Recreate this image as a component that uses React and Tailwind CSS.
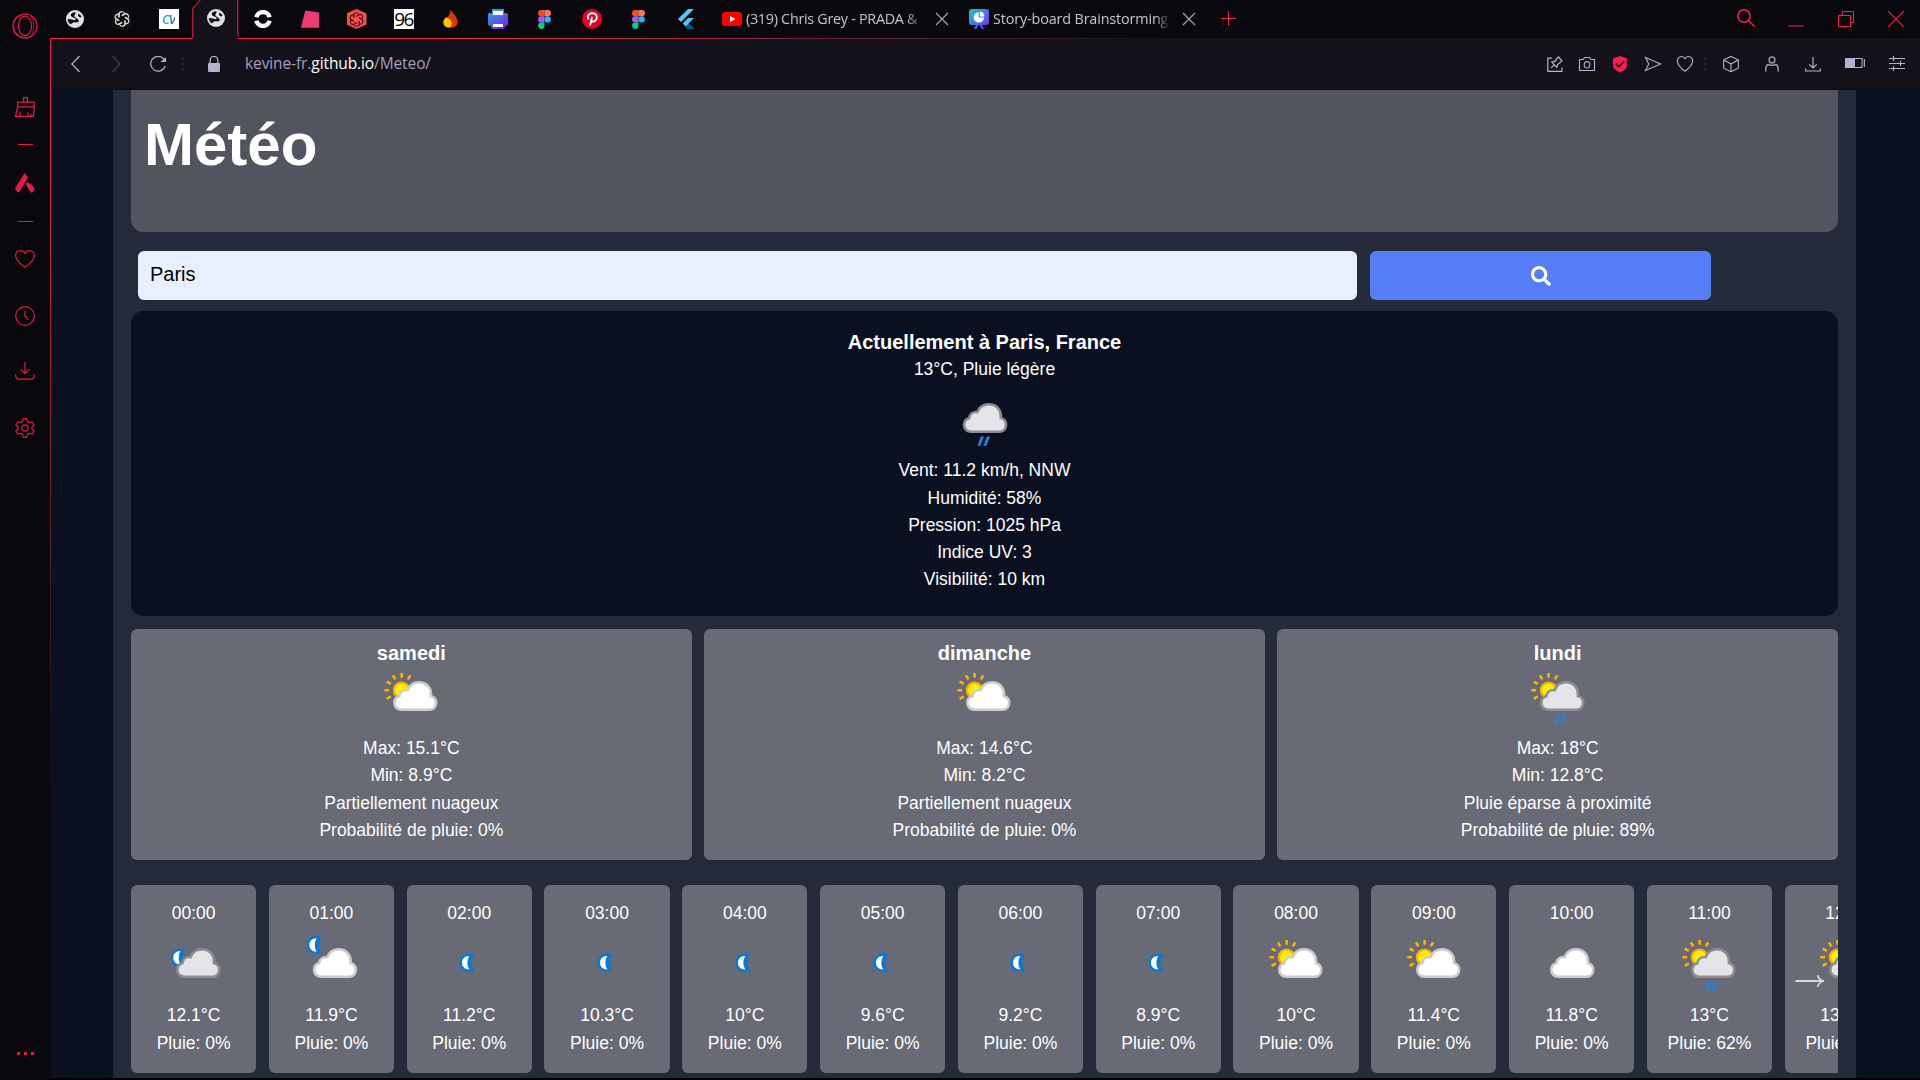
import React from "react";
import { FaSearch } from "react-icons/fa";

const RED = "#fa1e4e";
const LILAC = "#b9b0cf";

const CLOUD =
  "M8.5 28.7C4 28.7 1.3 25.7 1.3 22C1.3 18.7 3.3 16 6.3 15.3C6.8 11.2 10 8.6 14.6 9.1C16.5 4 21 1.3 26.3 1.3C33 1.3 38 6.3 38 13C38 13.8 38 14.4 37.9 15.1C41 16 43.2 18.5 43.2 21.8C43.2 25.8 40.5 28.7 36.5 28.7Z";

function Moon({ x, y }) {
  return (
    <g transform={`translate(${x} ${y})`}>
      <path d="M15.5 1.8C8.5 -1 0.5 2.5 0.5 10C0.5 17.5 8.5 21 15.5 18.2C11.2 13 11.2 7 15.5 1.8Z" fill="#0a78d8" />
      <path d="M10.3 3.3C5.8 3.2 3 6 3 10C3 14 5.8 16.8 10.3 16.7C7.8 12.5 7.8 7.5 10.3 3.3Z" fill="#fff" />
    </g>
  );
}

function Cloud({ x, dark }) {
  return (
    <path
      d={CLOUD}
      transform={`translate(${x} 14)`}
      fill={dark ? "#e5e4e9" : "#fff"}
      stroke={dark ? "#8e8e8f" : "#cbcbcc"}
      strokeWidth="2.6"
    />
  );
}

function Rain({ x }) {
  return (
    <g transform={`translate(${x} 47)`} fill="#1f86e0">
      <path d="M4 0.5H7L3.4 9.7H0.4Z" />
      <path d="M10 0.5H13L9.4 9.7H6.4Z" />
    </g>
  );
}

function Sun() {
  return (
    <g>
      <circle cx="30.6" cy="23.2" r="7.6" fill="#fff200" stroke="#ffb000" strokeWidth="2.4" />
      <g stroke="#ffb000" strokeWidth="2.6">
        {[-120, -90, -60, -30, 0, 30].map((a) => (
          <path key={a} d="M30.6 10.7V6" transform={`rotate(${a} 30.6 23.2)`} />
        ))}
      </g>
    </g>
  );
}

function Weather({ kind, className }) {
  return (
    <svg viewBox="0 0 80 60" className={`h-[60px] w-[80px] shrink-0 ${className || ""}`}>
      {kind === "moon" && <Moon x={30} y={18.7} />}
      {kind === "night-overcast" && (<><Moon x={16.3} y={13.7} /><Cloud x={22} dark /></>)}
      {kind === "night-cloud" && (<><Moon x={15.4} y={1} /><Cloud x={21.7} /></>)}
      {kind === "sun-cloud" && (<><Sun /><Cloud x={22} /></>)}
      {kind === "sun-rain" && (<><Sun /><Cloud x={22} dark /><Rain x={35.8} /></>)}
      {kind === "cloud" && <Cloud x={18} />}
      {kind === "rain" && (<><Cloud x={17.8} dark /><Rain x={32} /></>)}
    </svg>
  );
}

function Globe() {
  return (
    <svg viewBox="0 0 18 18" className="size-[18px]">
      <circle cx="9" cy="9" r="9" fill="#dfe1e5" />
      <path d="M9.6 2.2C6 2.4 4.6 3.6 4.9 5.6C5.2 7.5 7.6 7.4 9 8.2C10.2 9 9.8 10.4 8.2 10.2C5.8 9.9 4.4 8.6 1.8 9.2C2 12 3.2 13.6 4.8 14.2C6.4 13.6 6.2 12.4 8 12.2C11 12 13.4 12.8 12.6 10.2C12 8.4 9.2 8 8.4 6.4C7.8 5 9.6 5 9.6 2.2Z" fill="#09080d" />
      <path d="M14.6 7.5C12.4 6.6 11.2 5.6 12.4 3.4L15.6 6.2Z" fill="#09080d" />
    </svg>
  );
}

function Knot({ color, size }) {
  return (
    <svg viewBox="-10 -10 20 20" width={size} height={size} fill="none" stroke={color} strokeWidth="1.5">
      {[0, 60, 120, 180, 240, 300].map((a) => (
        <path key={a} d="M-3.8 -2.1V-6C-3.8 -9.6 1.4 -10 2.9 -7.2M-0.2 -4.2L4.4 -6.6" transform={`rotate(${a})`} />
      ))}
    </svg>
  );
}

function Figma() {
  return (
    <svg viewBox="0 0 13 19" className="h-[19px] w-[13px]">
      <path d="M3.2 0H6.5V6.3H3.2A3.15 3.15 0 0 1 3.2 0Z" fill="#f24e1e" />
      <path d="M6.5 0H9.8A3.15 3.15 0 0 1 9.8 6.3H6.5Z" fill="#ff7262" />
      <path d="M3.2 6.3H6.5V12.6H3.2A3.15 3.15 0 0 1 3.2 6.3Z" fill="#a259ff" />
      <circle cx="9.7" cy="9.45" r="3.15" fill="#1abcfe" />
      <path d="M3.2 12.6H6.5V15.8A3.2 3.2 0 1 1 3.2 12.6Z" fill="#0acf83" />
    </svg>
  );
}

const favicons = [
  <Globe />,
  <span className="grid size-[19px] place-items-center rounded-sm bg-[#0f0f0f]"><Knot color="#e8e8e8" size={16} /></span>,
  <span className="grid size-5 place-items-center bg-white">
    <span className="bg-linear-to-r from-[#16c0e8] to-[#1f4fe0] bg-clip-text font-['Open_Sans',sans-serif] text-[13px] leading-none font-semibold tracking-[-1px] text-transparent italic">CV</span>
  </span>,
  <Globe />,
  <svg viewBox="0 0 18 18" className="size-[18px]" fill="none" stroke="#fff" strokeWidth="4.4">
    <path d="M2.4 7.2A6.8 6.8 0 0 1 15.6 7.2M2.4 10.8A6.8 6.8 0 0 0 15.6 10.8" />
  </svg>,
  <svg viewBox="0 0 18 18" className="size-[18px]"><path d="M4.2 0.6L18 2.6V17.8H0Z" fill="#f03a78" /></svg>,
  <span className="grid size-5 place-items-center bg-[#f1504f] [clip-path:polygon(50%_0,100%_22%,100%_78%,50%_100%,0_78%,0_22%)]"><Knot color="#5a0f12" size={15} /></span>,
  <span className="grid size-5 place-items-center overflow-hidden bg-white font-['Open_Sans',sans-serif] text-[19px] leading-none tracking-[-1.5px] text-black">96</span>,
  <svg viewBox="0 0 15 18" className="h-[18px] w-[15px]">
    <path d="M7.5 0C10.5 3.5 14.6 7.5 14.6 11.8C14.6 15.8 11.5 17.8 7.3 17.8C3.5 17.8 1.5 14 3.5 9.5C5 6 7.6 4 7.5 0Z" fill="#e03400" />
    <path d="M3 7.2C6 8.2 9 11 8.8 14C8.6 16.3 7 17.6 5 17.4C2 17.1 0.2 15 0.3 12.2C0.4 10 1.8 8.6 3 7.2Z" fill="#ffc400" />
  </svg>,
  <svg viewBox="0 0 20 20" className="size-5">
    <defs><linearGradient id="pr" x1="0" y1="0" x2="0.6" y2="1"><stop offset="0" stopColor="#12c4d8" /><stop offset="0.5" stopColor="#4d6ee8" /><stop offset="1" stopColor="#6c2be0" /></linearGradient></defs>
    <path d="M4 0H16V4H18A2 2 0 0 1 20 6V15A2 2 0 0 1 18 17H17V18A2 2 0 0 1 15 20H5A2 2 0 0 1 3 18V17H2A2 2 0 0 1 0 15V6A2 2 0 0 1 2 4H4Z" fill="url(#pr)" />
    <path d="M5 2H15V6H5ZM5 15H15V18H5Z" fill="#fff" />
  </svg>,
  <Figma />,
  <svg viewBox="0 0 20 20" className="size-5">
    <circle cx="10" cy="10" r="10" fill="#e60023" />
    <path d="M8 16.5L10.2 7.8M6.6 10.6C4.4 7 7 4.2 10.4 4.2C14 4.2 15.4 6.8 14.6 9.6C13.6 13 10.6 13.2 9.4 11.6" fill="none" stroke="#fff" strokeWidth="1.9" />
  </svg>,
  <Figma />,
  <svg viewBox="0 0 16 20" className="h-5 w-4">
    <path d="M10 0H16L3 13L0 10Z" fill="#54c5f8" />
    <path d="M10 9H16L10.6 14.5L16 20H10L4.8 14.6Z" fill="#54c5f8" />
    <path d="M7.6 17.4L10.6 14.5L16 20H10Z" fill="#01579b" />
  </svg>,
];

function CloseX() {
  return (
    <svg viewBox="0 0 14 14" className="size-[14px] shrink-0" stroke="#a5a5a8" strokeWidth="1.2"><path d="M1 1L13 13M13 1L1 13" /></svg>
  );
}

function TabBar() {
  return (
    <div className="flex h-[38px] items-center pl-[1px]">
      {favicons.map((icon, i) => (
        <div key={i} className={i === 3 ? "relative z-10 flex h-[40px] w-[47px] shrink-0 items-center justify-center pb-[2px]" : "flex h-[38px] w-[47px] shrink-0 items-center justify-center"}>
          {i === 3 && (
            <svg viewBox="0 0 47 40" className="absolute top-0 left-0 h-[40px] w-[47px]">
              <path d="M0.8 40V9.2L8.8 0.5H45.8V40Z" fill="#13111a" />
              <path d="M0.8 38.5V9.2L8.8 0.5H45.8V36L47.5 38.5" fill="none" stroke={RED} />
            </svg>
          )}
          <span className="relative flex">{icon}</span>
        </div>
      ))}
      <div className="ml-[13px] flex w-[247px] items-center font-['Open_Sans',sans-serif] text-[14.4px] whitespace-nowrap text-[#c6c6c9]">
        <svg viewBox="0 0 20 14" className="mr-1 h-[14px] w-5 shrink-0"><rect width="20" height="14" rx="3" fill="#f00" /><path d="M8 4L13.4 7L8 10Z" fill="#fff" /></svg>
        <span className="w-[181px] overflow-hidden tracking-[-0.3px] [mask-image:linear-gradient(90deg,#000_88%,transparent)]">(319) Chris Grey - PRADA &amp;</span>
        <span className="ml-[8px] flex"><CloseX /></span>
      </div>
      <div className="flex w-[258px] items-center font-['Open_Sans',sans-serif] text-[14.4px] whitespace-nowrap text-[#c6c6c9]">
        <svg viewBox="0 0 20 20" className="mr-[4px] size-5 shrink-0">
          <defs><linearGradient id="sb" x1="0" y1="0" x2="1" y2="1"><stop offset="0" stopColor="#10c8d0" /><stop offset="0.5" stopColor="#4777ec" /><stop offset="1" stopColor="#7a2be8" /></linearGradient></defs>
          <path d="M3 0H17A3 3 0 0 1 20 3V13A3 3 0 0 1 17 16H13L15 20H12.5L11 16.5H9L7.5 20H5L7 16H3A3 3 0 0 1 0 13V3A3 3 0 0 1 3 0Z" fill="url(#sb)" />
          <path d="M9.6 3.2V8.6H15A5.2 5.2 0 1 1 9.6 3.2Z" fill="#fff" /><path d="M10.8 2.4A5 5 0 0 1 15.4 7.4H10.8Z" fill="#fff" />
        </svg>
        <span className="w-[177px] overflow-hidden tracking-[-0.15px] [mask-image:linear-gradient(90deg,#000_92%,transparent)]">Story-board Brainstorming</span>
        <span className="ml-[12px] flex"><CloseX /></span>
      </div>
      <svg viewBox="0 0 15 15" className="mb-[2px] -ml-[6px] size-[15px]" stroke={RED}><path d="M7.5 0V15M0 7.5H15" /></svg>
      <div className="mr-[16px] ml-auto flex items-center" fill="none">
        <svg viewBox="0 0 18 18" className="mb-[2px] size-[18px]" fill="none" stroke={RED} strokeWidth="1.5"><circle cx="7" cy="7" r="6.2" /><path d="M11.5 11.5L17.5 17.5" /></svg>
        <svg viewBox="0 0 16 16" className="ml-[33px] size-4" stroke={RED}><path d="M0 15H16" /></svg>
        <svg viewBox="0 0 16 16" className="ml-[34px] size-4" fill="none" stroke={RED}><path d="M0.5 4.5H12.5V15.5H0.5ZM4.5 4.5V0.5H15.5V11.5H12.5" /></svg>
        <svg viewBox="0 0 16 16" className="ml-[34px] size-4" stroke={RED} strokeWidth="1.2"><path d="M0 0L16 16M16 0L0 16" /></svg>
      </div>
    </div>
  );
}

function Dots() {
  return (
    <span className="flex flex-col gap-[3px]">
      <i className="h-[2px] w-[3px] bg-[#25222f]" /><i className="h-[2px] w-[3px] bg-[#25222f]" /><i className="h-[2px] w-[3px] bg-[#25222f]" />
    </span>
  );
}

function ToolBar() {
  const base = "size-4 shrink-0 overflow-visible";
  return (
    <div className="flex h-[51px] items-center border-b border-[#0c0b12] bg-[#13111a] pr-[15px] pl-[20px]" >
      <svg viewBox="0 0 9 16" className="h-4 w-[9px]" fill="none" stroke={LILAC} strokeWidth="1.2"><path d="M8.6 0L0.8 8L8.6 16" /></svg>
      <svg viewBox="0 0 9 16" className="ml-[32px] h-4 w-[9px]" fill="none" stroke="#45404f" strokeWidth="1.2"><path d="M0.4 0L8.2 8L0.4 16" /></svg>
      <svg viewBox="0 0 16 16" className="ml-[29px] size-4" fill="none" stroke={LILAC} strokeWidth="1.2"><path d="M13.8 3A7.4 7.4 0 1 0 15.2 10" /><path d="M16 1V6H10.5Z" fill={LILAC} stroke="none" /></svg>
      <span className="ml-[15px]"><Dots /></span>
      <svg viewBox="0 0 12 16" className="ml-[24px] h-4 w-3"><rect y="7" width="12" height="9" rx="1" fill={LILAC} /><path d="M2.2 7V4.2A3.8 3.8 0 0 1 9.8 4.2V7" fill="none" stroke={LILAC} strokeWidth="1.3" /></svg>
      <span className="ml-[25px] font-['Open_Sans',sans-serif] text-[15.5px] tracking-[-0.1px] text-[#a79fba]">kevine-fr.<span className="text-white">github.io</span>/Meteo/</span>

      <div className="ml-auto flex items-center" stroke={LILAC}>
        <svg viewBox="0 0 16 16" className={base} fill="none" stroke={LILAC} strokeWidth="1.2"><path d="M5 2.2H0.8V15.4H15V11.5M4.2 11.8L7.4 8.4M4.8 6.2L9.8 11.4L10.6 8.6L15 5L11.4 0.8L8 5.4Z" /></svg>
        <svg viewBox="0 0 16 16" className={`${base} ml-[16px]`} fill="none" stroke={LILAC} strokeWidth="1.1"><path d="M0.5 3.5H4L5.5 1.5H10.5L12 3.5H15.5V14.5H0.5Z" /><ellipse cx="8" cy="8.8" rx="2.8" ry="3.2" /></svg>
        <svg viewBox="0 0 14 16" className="ml-[18px] h-[16px] w-[14px]"><path d="M7 0L14 2.5V9.5C14 12.5 11 14.8 7 16.4C3 14.8 0 12.5 0 9.5V2.5Z" fill="#fa1e4e" /><path d="M2.8 7.6L5.8 10.8L11.2 5" fill="none" stroke="#2a0a14" strokeWidth="1.6" /></svg>
        <svg viewBox="0 0 16 16" className={`${base} ml-[18px]`} fill="none" stroke={LILAC} strokeWidth="1.1"><path d="M0.5 1.5L15.5 8L0.5 14.5L3.8 8Z" /></svg>
        <svg viewBox="0 0 16 16" className={`${base} ml-[16px]`} fill="none" stroke={LILAC} strokeWidth="1.1"><path d="M8 15.2C3.5 12 0.4 8.8 0.4 5C0.4 0.4 6 -1 8 2.8C10 -1 15.6 0.4 15.6 5C15.6 8.8 12.5 12 8 15.2Z" /></svg>
        <span className="ml-[11px]"><Dots /></span>
        <svg viewBox="0 0 16 16" className={`${base} ml-[16px]`} fill="none" stroke={LILAC} strokeWidth="1.1"><path d="M8 0.4L15.3 3.8V12.2L8 15.7L0.7 12.2V3.8ZM0.7 3.8L8 8L15.3 3.8M8 8V15.7" /></svg>
        <svg viewBox="0 0 16 16" className={`${base} ml-[25px]`} fill="none" stroke="#9c94ae" strokeWidth="1.5"><circle cx="8" cy="4" r="2.9" /><path d="M1.8 15.4V13C1.8 9.8 3.4 8.4 5 8.4C6 9.6 10 9.6 11 8.4C12.6 8.4 14.2 9.8 14.2 13V15.4" /></svg>
        <svg viewBox="0 0 16 16" className={`${base} ml-[25px]`} fill="none" stroke={LILAC} strokeWidth="1.2"><path d="M8 1V12M4.2 8.4L8 12L11.8 8.4M0.7 12.5V15H15.3V12.5" /></svg>
        <svg viewBox="0 0 20 10" className="mb-[2px] ml-[24px] h-[10px] w-5"><rect x="0.5" y="0.5" width="16.5" height="9" fill="none" stroke={LILAC} /><rect width="10" height="10" fill={LILAC} /><path d="M19.3 1V9" stroke={LILAC} strokeWidth="1.2" /></svg>
        <svg viewBox="0 0 16 16" className={`${base} ml-[24px]`} stroke={LILAC} strokeWidth="1.1"><path d="M0 2.5H16M0 7.5H16M0 12.5H16M4.5 0V5M11.5 5V10M4.5 10V15" /></svg>
      </div>
    </div>
  );
}

function SideBar() {
  const s = { fill: "none", stroke: "#e21b47", strokeWidth: 1.2 };
  return (
    <aside className="flex h-full w-[50px] shrink-0 flex-col items-center pt-[13px]">
      <svg viewBox="0 0 26 26" className="size-[26px]" {...s}><circle cx="13" cy="13" r="12" /><ellipse cx="13" cy="13" rx="6.5" ry="9.8" /><path d="M15 1.2C6 2 1.5 7 1.5 13S6 24 15 24.8M18 2.5C23 6 23 20 18 23.5" strokeWidth="0.8" /></svg>
      <svg viewBox="0 0 20 20" className="mt-[58px] size-5 overflow-visible" {...s} strokeWidth="1.3"><path d="M8.5 5V0.7H12.5V5M2.6 9.8V5.2H19.3V9.8H2.6L0.6 19.3H18.4L19.3 9.8M5 19V14.5M13 19V15.5M16 19V17" /></svg>
      <i className="mt-[27px] h-px w-[15px] bg-[#e21b47]" />
      <svg viewBox="0 0 20 20" className="mt-[28px] size-5" fill="#e21b47"><path d="M9.6 0L13 4.4L4.4 19.2H2.4L0 15.6Z" /><path d="M11 9.4C15.5 9.6 18 12 19.6 16.2L17.6 19.4H15.8L11 11.8Z" /></svg>
      <i className="mt-[28px] h-px w-[15px] bg-[#e21b47]" />
      <svg viewBox="0 0 20 18" className="mt-[28px] mr-[1px] h-[18px] w-5" {...s}><path d="M10 17.2C4 13 0.6 9.4 0.6 5.4C0.6 0 7.6 -1 10 3.4C12.4 -1 19.4 0 19.4 5.4C19.4 9.4 16 13 10 17.2Z" /></svg>
      <svg viewBox="0 0 20 20" className="mt-[38px] mr-[1px] size-5" {...s}><circle cx="10" cy="10" r="9.3" /><path d="M10 5V10L13.4 13.6" /></svg>
      <svg viewBox="0 0 20 18" className="mt-[36px] mr-[1px] h-[18px] w-5" {...s}><path d="M10 0V11.5M5.5 7.2L10 11.5L14.5 7.2M0.6 12.5C0.6 15.5 1.8 17.2 4.5 17.2H15.5C18.2 17.2 19.4 15.5 19.4 12.5" /></svg>
      <svg viewBox="0 0 20 20" className="mt-[38px] mr-[1px] size-5" {...s}><circle cx="10" cy="10" r="3.2" /><path d="M8.2 0.7H11.8L12.4 3.6L14.6 4.8L17.2 3.8L19 7L17 9V11L19 13L17.2 16.2L14.6 15.2L12.4 16.4L11.8 19.3H8.2L7.6 16.4L5.4 15.2L2.8 16.2L1 13L3 11V9L1 7L2.8 3.8L5.4 4.8L7.6 3.6Z" strokeLinejoin="round" /></svg>
      <span className="mt-auto mb-[25px] flex gap-[4px]">
        <i className="size-[3px] bg-[#e21b47]" /><i className="size-[3px] bg-[#e21b47]" /><i className="size-[3px] bg-[#e21b47]" />
      </span>
    </aside>
  );
}

const days = [
  ["samedi", "sun-cloud", "15.1", "8.9", "Partiellement nuageux", 0],
  ["dimanche", "sun-cloud", "14.6", "8.2", "Partiellement nuageux", 0],
  ["lundi", "sun-rain", "18", "12.8", "Pluie éparse à proximité", 89],
];

const hours = [
  ["00:00", "night-overcast", "12.1", 0],
  ["01:00", "night-cloud", "11.9", 0],
  ["02:00", "moon", "11.2", 0],
  ["03:00", "moon", "10.3", 0],
  ["04:00", "moon", "10", 0],
  ["05:00", "moon", "9.6", 0],
  ["06:00", "moon", "9.2", 0],
  ["07:00", "moon", "8.9", 0],
  ["08:00", "sun-cloud", "10", 0],
  ["09:00", "sun-cloud", "11.4", 0],
  ["10:00", "cloud", "11.8", 0],
  ["11:00", "sun-rain", "13", 62],
  ["12:00", "sun-rain", "13.4", 62],
];

function Page() {
  return (
    <main className="min-h-0 flex-1 overflow-hidden bg-[#0b1021] pr-[64px] pl-[62px] font-['Liberation_Sans',Arial,sans-serif] text-[17.5px] leading-[27.3px] text-white">
      <div className="h-full bg-[#252a3a] px-[18px]">
        <header className="h-[142px] rounded-b-[12.5px] bg-[#52555f] px-[13px] pt-[20px]">
          <h1 className="text-[60px] leading-[70px] font-bold">Météo</h1>
        </header>
        <div className="mt-[19px] flex h-[49px] gap-[13px] pl-[7px]">
          <div className="w-[1219px] rounded-[6px] bg-[#e8f0fe] pl-[12px] text-[20px] leading-[47px] text-black">Paris</div>
          <button className="grid w-[341px] place-items-center rounded-[6px] bg-[#557ef6]"><FaSearch size={20} /></button>
        </div>
        <section className="mt-[11px] flex h-[305px] flex-col items-center rounded-[12.5px] bg-[#0b1021] pt-[17px]">
          <h2 className="text-[20px] leading-[28px] font-bold">Actuellement à Paris, France</h2>
          <p>13°C, Pluie légère</p>
          <Weather kind="rain" className="mt-[6px] mb-[8px]" />
          <p>Vent: 11.2 km/h, NNW</p>
          <p>Humidité: 58%</p>
          <p>Pression: 1025 hPa</p>
          <p>Indice UV: 3</p>
          <p>Visibilité: 10 km</p>
        </section>
        <section className="mt-[13px] grid h-[231px] grid-cols-3 gap-[12.5px]">
          {days.map(([name, kind, max, min, text, rain]) => (
            <article key={name} className="flex flex-col items-center rounded-[6px] bg-[#686a75] pt-[10px]">
              <h3 className="text-[20px] leading-[28px] font-bold">{name}</h3>
              <Weather kind={kind} className="mb-[8px]" />
              <p>Max: {max}°C</p>
              <p>Min: {min}°C</p>
              <p>{text}</p>
              <p>Probabilité de pluie: {rain}%</p>
            </article>
          ))}
        </section>
        <section className="relative mt-[25px] flex h-[188px] gap-[12.5px] overflow-hidden">
          {hours.map(([time, kind, temp, rain]) => (
            <article key={time} className="flex w-[125.3px] shrink-0 flex-col items-center rounded-[6px] bg-[#686a75] pt-[15px]">
              <p>{time}</p>
              <Weather kind={kind} className="mt-[7px] mb-[8px]" />
              <p>{temp}°C</p>
              <p>Pluie: {rain}%</p>
            </article>
          ))}
          <svg viewBox="0 0 30 14" className="absolute top-[89px] right-[13px] h-[14px] w-[30px]" fill="none" stroke="#d8d8db" strokeWidth="1.8"><path d="M0.5 7H28M22.5 1.2C23.5 4.5 25.5 6.2 28.8 7C25.5 7.8 23.5 9.5 22.5 12.8" /></svg>
        </section>
      </div>
    </main>
  );
}

export default function App() {
  return (
    <div className="flex h-[1080px] w-[1920px] overflow-hidden bg-[#09080d]">
      <SideBar />
      <div className="flex min-w-0 flex-1 flex-col">
        <TabBar />
        <div className="h-px w-full shrink-0 bg-linear-to-r from-[#fa1e4e] from-20% to-[#13111a] to-60%" />
        <div className="flex min-h-0 flex-1">
          <div className="w-px bg-linear-to-b from-[#fa1e4e] from-10% to-[#09080d] to-75%" />
          <div className="flex min-w-0 flex-1 flex-col">
            <ToolBar />
            <Page />
            <div className="h-[2px] shrink-0 bg-black" />
          </div>
        </div>
      </div>
    </div>
  );
}
